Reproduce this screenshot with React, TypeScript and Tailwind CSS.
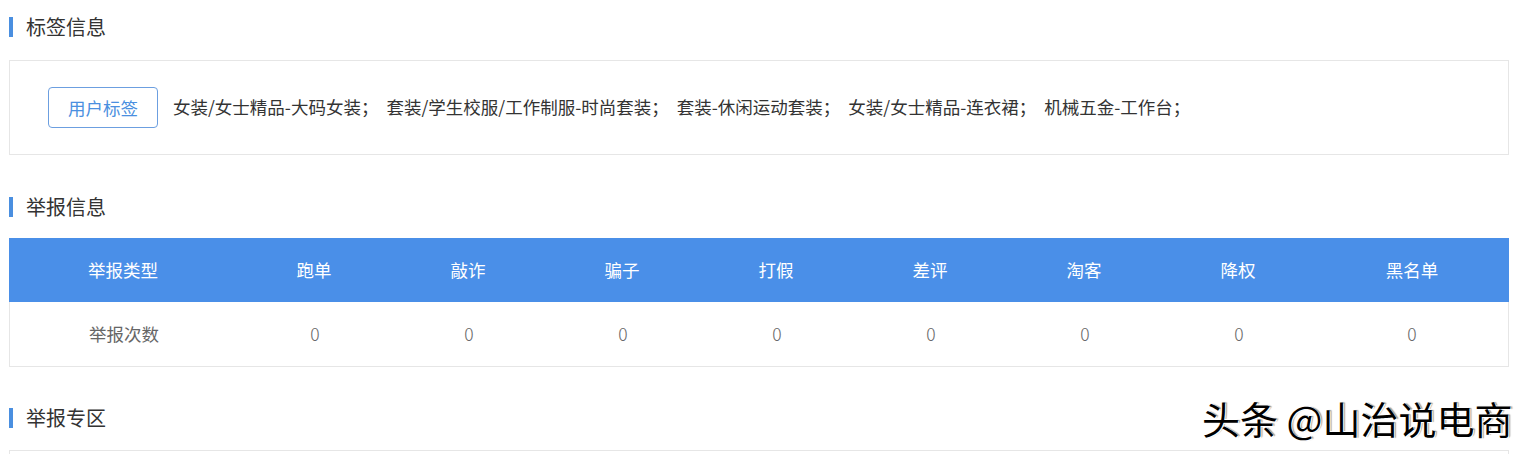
import React from "react";

const font = "font-['Microsoft_YaHei','Noto_Sans_CJK_SC',sans-serif]";

const tags = [
  "女装/女士精品-大码女装；",
  "套装/学生校服/工作制服-时尚套装；",
  "套装-休闲运动套装；",
  "女装/女士精品-连衣裙；",
  "机械五金-工作台；",
];

const types = ["跑单", "敲诈", "骗子", "打假", "差评", "淘客", "降权", "黑名单"];

function SectionTitle({ title }: { title: string }) {
  return (
    <div className="flex items-center h-[20px]">
      <div className="w-[4px] h-[20px] bg-[#4a8fe0]" />
      <span className="ml-[13px] text-[20px] leading-[20px] text-[#333]">{title}</span>
    </div>
  );
}

export default function App() {
  return (
    <div className={`relative w-[1536px] h-[454px] overflow-hidden bg-white pl-[9px] pr-[27px] pt-[17px] ${font}`}>
      {/* 标签信息 */}
      <SectionTitle title="标签信息" />
      <div className="mt-[23px] border border-[#e6e6e6] h-[95px] flex items-center pl-[38px]">
        <button className="w-[110px] h-[41px] rounded-[4px] border border-[#6c9fe0] text-[#4a8fe0] text-[17.5px] leading-none flex items-center justify-center">
          用户标签
        </button>
        <div className="ml-[15px] flex text-[17.5px] text-[#333]">
          {tags.map((t, i) => (
            <span key={i} className="mr-[8px]">
              {t}
            </span>
          ))}
        </div>
      </div>

      {/* 举报信息 */}
      <div className="mt-[42px]">
        <SectionTitle title="举报信息" />
      </div>
      <div className="mt-[21px]">
        <div className="grid grid-cols-[228px_repeat(7,154px)_1fr] h-[64px] bg-[#4a8fe8] text-white text-[17.5px]">
          <div className="flex items-center justify-center">举报类型</div>
          {types.map((t) => (
            <div key={t} className="flex items-center justify-center">
              {t}
            </div>
          ))}
        </div>
        <div className="grid grid-cols-[228px_repeat(7,154px)_1fr] h-[65px] border-x border-b border-[#e6e6e6] text-[#666] text-[17.5px]">
          <div className="flex items-center justify-center">举报次数</div>
          {types.map((t) => (
            <div key={t} className="flex items-center justify-center font-light">
              0
            </div>
          ))}
        </div>
      </div>

      {/* 举报专区 */}
      <div className="mt-[41px]">
        <SectionTitle title="举报专区" />
      </div>
      <div className="mt-[22px] border border-[#e6e6e6] h-[60px]" />

      {/* watermark */}
      <div className="absolute left-[1202px] top-[396px] text-[38px] leading-[44px] text-black whitespace-nowrap [text-shadow:1px_1px_0_#fff,-1px_-1px_0_#fff,2px_0_1px_rgba(0,0,0,0.4)]">
        头条 @山治说电商
      </div>
    </div>
  );
}
